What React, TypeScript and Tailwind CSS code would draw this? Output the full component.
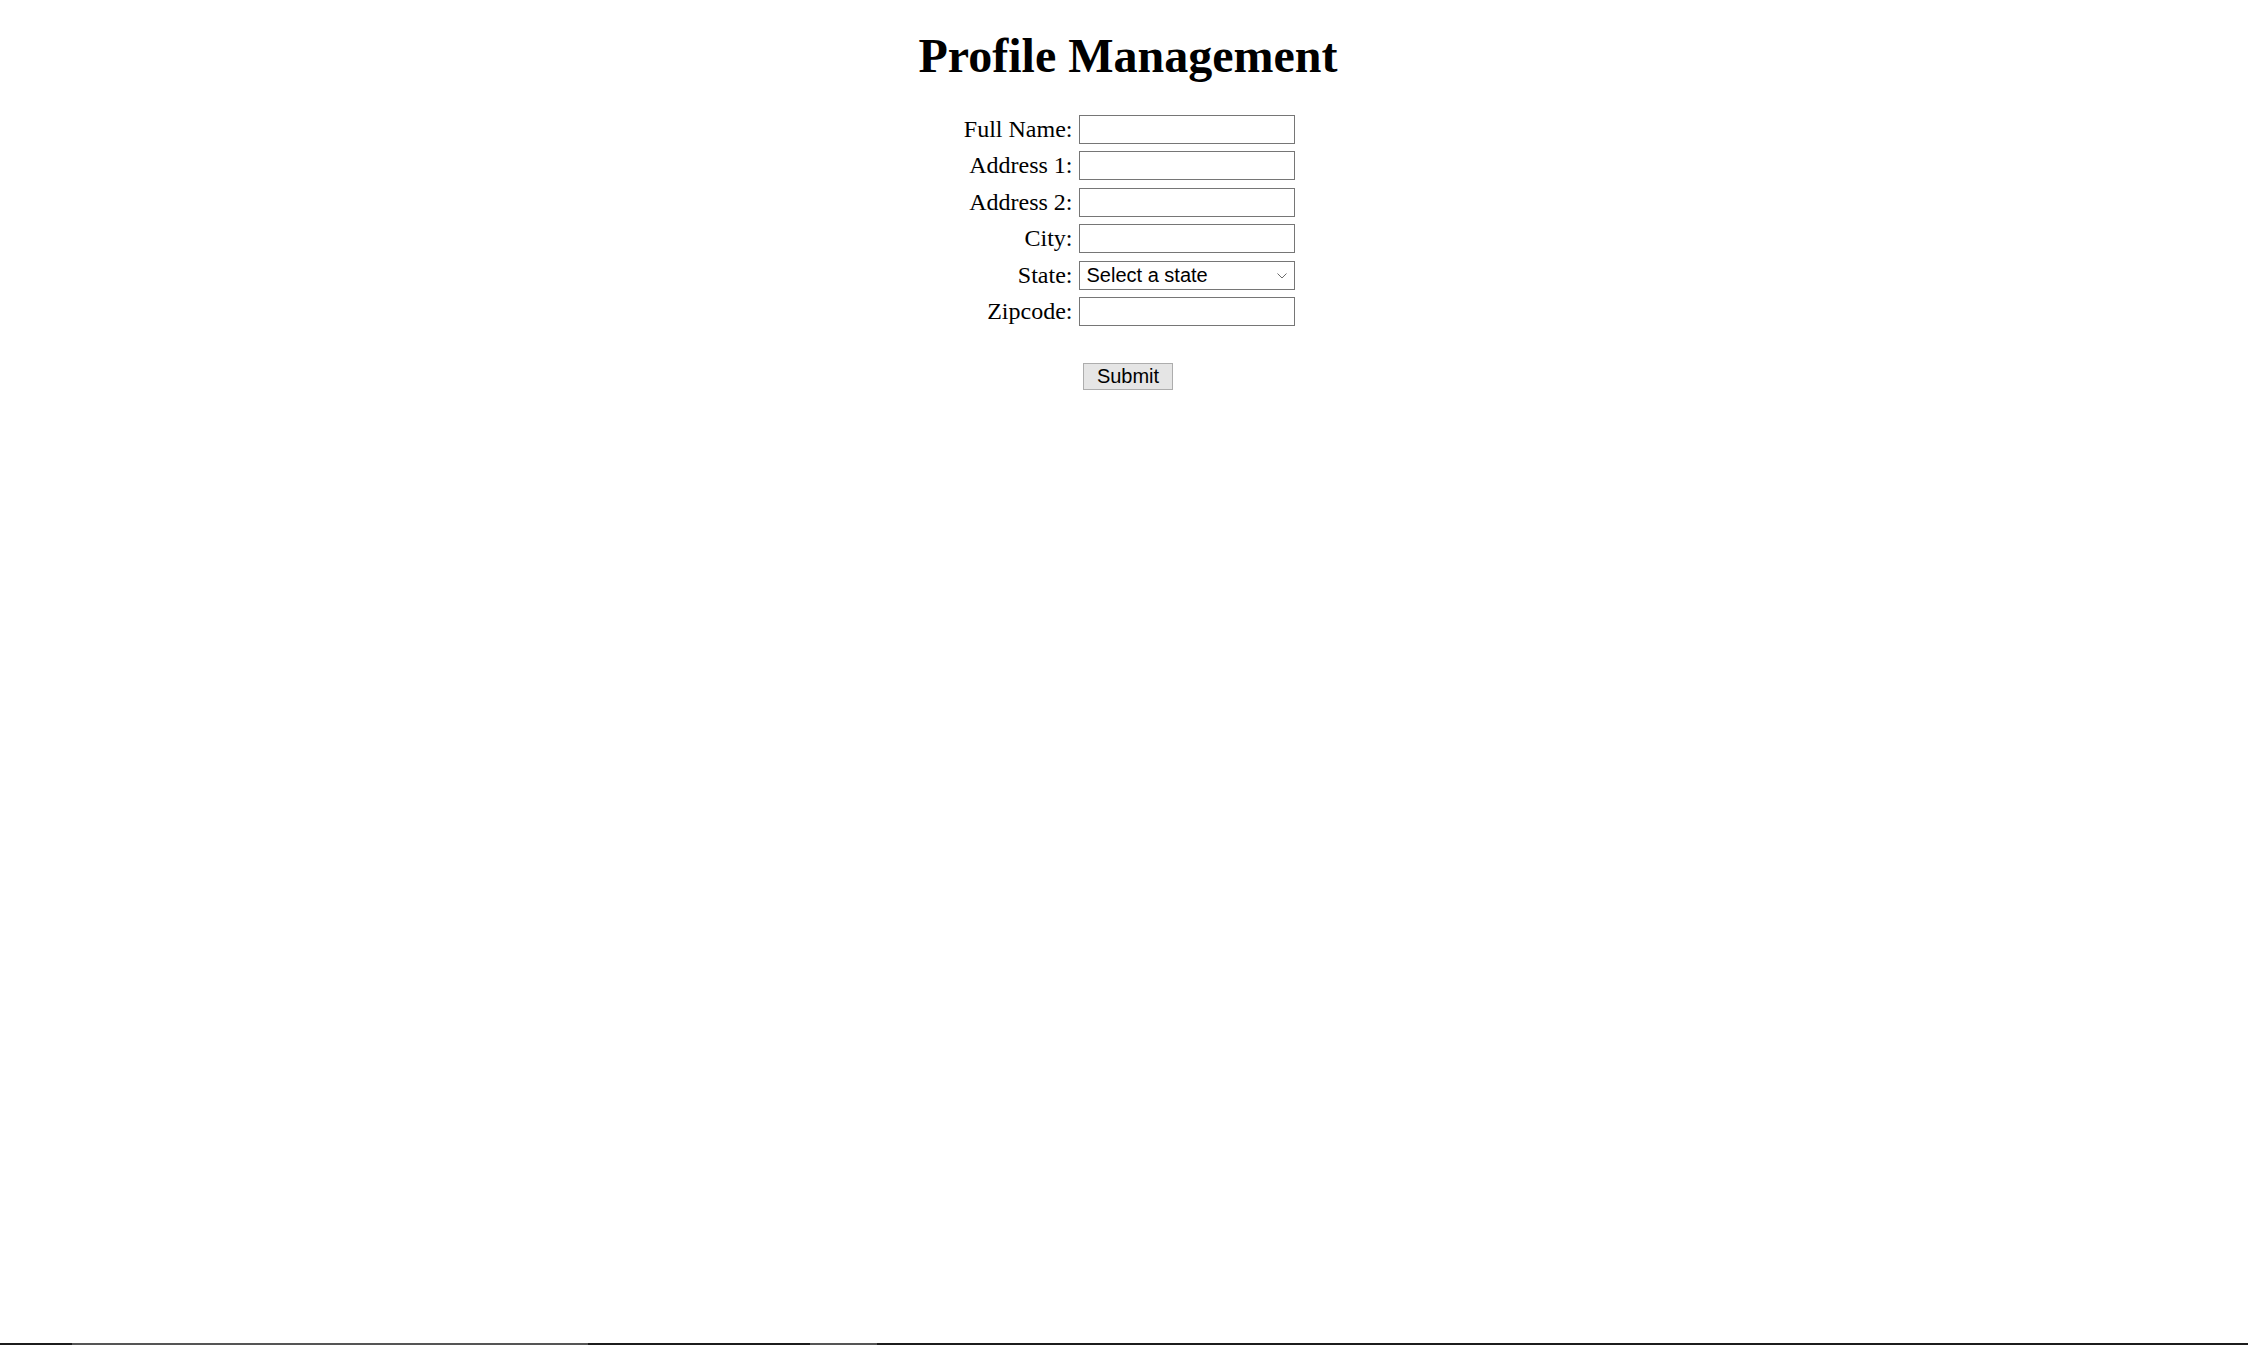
import type { ReactNode } from 'react'

const fields: { label: string; kind: 'input' | 'select' }[] = [
  { label: 'Full Name:', kind: 'input' },
  { label: 'Address 1:', kind: 'input' },
  { label: 'Address 2:', kind: 'input' },
  { label: 'City:', kind: 'input' },
  { label: 'State:', kind: 'select' },
  { label: 'Zipcode:', kind: 'input' },
]

function Row({ label, children }: { label: string; children: ReactNode }) {
  return (
    <>
      <label className="text-right text-[24px] leading-[29px] text-black">{label}</label>
      {children}
    </>
  )
}

function StateSelect() {
  return (
    <div className="relative h-[29px] w-[216px]">
      <select
        defaultValue=""
        className="h-full w-full appearance-none border border-[#767676] bg-white pl-[7px] text-[20px] leading-[27px] text-black outline-none"
        style={{ fontFamily: '"Liberation Sans", Arial, sans-serif' }}
      >
        <option value="">Select a state</option>
      </select>
      <svg
        className="pointer-events-none absolute right-[8px] top-[12px]"
        width="10"
        height="6"
        viewBox="0 0 10 6"
        fill="none"
      >
        <path d="M0.5 0.5 L5 5 L9.5 0.5" stroke="#6b6b6b" strokeWidth="1" />
      </svg>
    </div>
  )
}

export default function App() {
  return (
    <div
      className="flex h-screen flex-col bg-white text-black"
      style={{ fontFamily: '"Liberation Serif", "Times New Roman", serif' }}
    >
      <div className="flex flex-col items-center pl-2">
        <h1 className="mt-[28px] text-[48px] font-bold leading-[55px]">Profile Management</h1>

        <form className="mt-[32px] flex flex-col items-center" onSubmit={(e) => e.preventDefault()}>
          <div className="grid grid-cols-[111px_216px] items-center gap-x-[6px] gap-y-[7.4px]">
            {fields.map((f) => (
              <Row key={f.label} label={f.label}>
                {f.kind === 'select' ? (
                  <StateSelect />
                ) : (
                  <input
                    type="text"
                    className="h-[29px] w-[216px] border border-[#767676] bg-white px-[2px] text-[20px] outline-none"
                  />
                )}
              </Row>
            ))}
          </div>

          <button
            type="submit"
            className="mt-[37px] h-[27px] w-[90px] border border-[#adadad] bg-[#e5e5e5] text-[20px] leading-[25px] text-black"
            style={{ fontFamily: '"Liberation Sans", Arial, sans-serif' }}
          >
            Submit
          </button>
        </form>
      </div>

      {/* thin dark strip along the bottom edge */}
      <div className="mt-auto flex h-[2px] bg-[#1c1c1c]">
        <div className="ml-[72px] w-[516px] bg-[#555555]" />
        <div className="ml-[222px] w-[67px] bg-[#555555]" />
      </div>
    </div>
  )
}
